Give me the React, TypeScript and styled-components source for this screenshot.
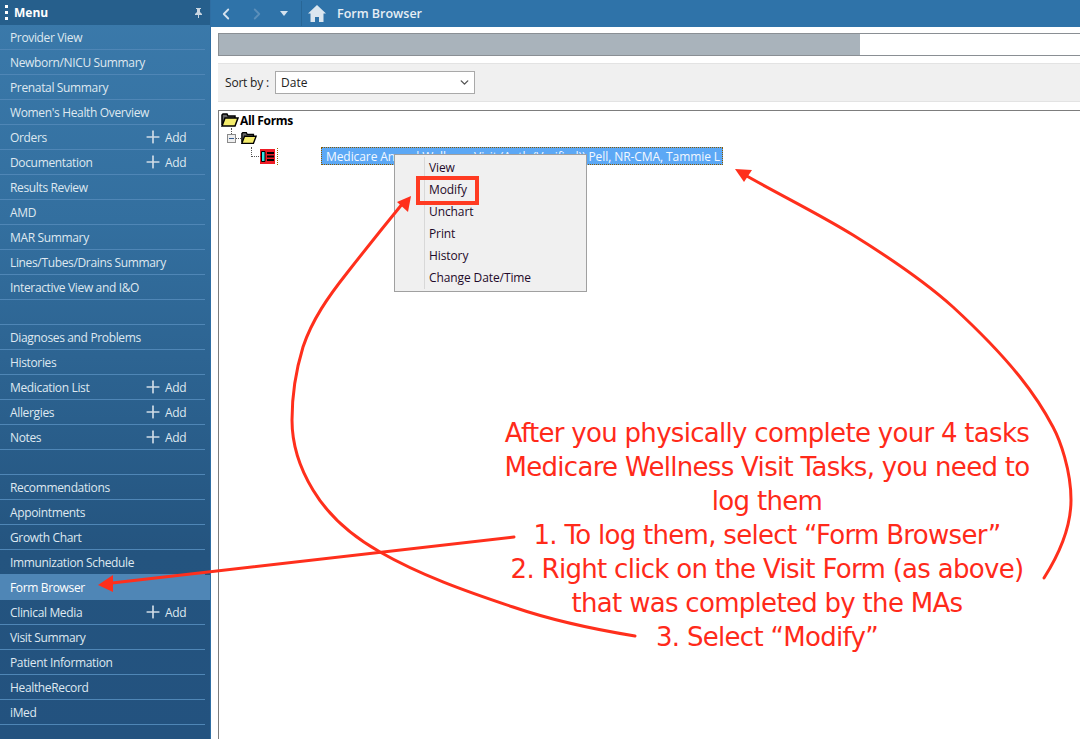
import React from 'react';
import styled, { createGlobalStyle } from 'styled-components';
import { ChevronDown, ChevronLeft, ChevronRight, Plus } from 'lucide-react';

const GlobalStyle = createGlobalStyle`
  html, body {
    margin: 0;
    padding: 0;
    background: #fff;
  }
  body {
    font-family: "Open Sans", "Noto Sans", sans-serif;
  }
`

const Page = styled.div`
  position: relative;
  width: 1080px;
  height: 739px;
  overflow: hidden;
  display: flex;
`

const Sidebar = styled.nav`
  width: 211px;
  box-sizing: border-box;
  flex: none;
  display: flex;
  flex-direction: column;
  background: linear-gradient(180deg, #3b7aab 0%, #336f9f 30%, #24547f 75%, #23527f 100%);
  border-right: 1px solid #2f6ea3;
`

const MenuHead = styled.div`
  height: 25px;
  flex: none;
  display: flex;
  align-items: center;
  background: #265f8c;
  color: #fff;
  font-size: 12px;
  font-weight: 700;
  padding: 0 8px 0 5px;
  gap: 6px;
`

const Dots = styled.span`
  width: 3px;
  height: 15px;
  background: repeating-linear-gradient(180deg, #fff 0 3px, transparent 3px 6px);
`

const HeadLabel = styled.span`
  flex: 1;
`

const SideRow = styled.div<{ $active?: boolean }>`
  height: 25px;
  box-sizing: border-box;
  flex: none;
  display: flex;
  align-items: center;
  padding-left: 10px;
  font-size: 12px;
  letter-spacing: -0.35px;
  color: ${(p) => (p.$active ? '#fff' : '#dfe8f0')};
  background: ${(p) => (p.$active ? '#4f86b6' : 'transparent')};
  margin-right: ${(p) => (p.$active ? '0' : '5px')};
  border-bottom: 1px solid ${(p) => (p.$active ? 'transparent' : '#4f86b6')};
`

const RowLabel = styled.span`
  flex: 1;
`

const AddLink = styled.span`
  width: 44px;
  margin-right: 18px;
  display: flex;
  align-items: center;
  gap: 2px;
  color: #dfe8f0;
`

const Main = styled.main`
  flex: 1;
  display: flex;
  flex-direction: column;
  min-width: 0;
`

const TopBar = styled.header`
  height: 27px;
  flex: none;
  display: flex;
  align-items: center;
  background: #2f73a9;
  color: #dbe6ef;
`

const NavGroup = styled.div`
  width: 91px;
  height: 25px;
  box-sizing: border-box;
  display: flex;
  align-items: center;
  padding-left: 6px;
  gap: 13px;
  border-right: 1px solid #286696;
`

const HomeIcon = styled.svg`
  margin: 0 11px 0 6px;
`

const Title = styled.h1`
  margin: 0;
  font-size: 12.5px;
  font-weight: 600;
  color: #e6eef5;
`

const Body = styled.div`
  flex: 1;
  padding: 6px 0 0 7px;
  display: flex;
  flex-direction: column;
  min-height: 0;
`

const Progress = styled.div`
  height: 23px;
  box-sizing: border-box;
  flex: none;
  border: 1px solid #8a8f94;
  border-right: none;
  background: #fff;
`

const ProgressFill = styled.div`
  width: 641px;
  height: 100%;
  background: #a9b3bb;
`

const SortBar = styled.div`
  height: 39px;
  box-sizing: border-box;
  margin-top: 7px;
  flex: none;
  display: flex;
  align-items: center;
  padding-left: 7px;
  background: #f0f0f0;
  border-top: 1px solid #e3e3e3;
  border-bottom: 1px solid #e3e3e3;
  font-size: 12px;
  color: #222;
`

const SortLabel = styled.span`
  width: 50px;
  letter-spacing: -0.2px;
`

const SortSelect = styled.div`
  width: 200px;
  height: 23px;
  box-sizing: border-box;
  border: 1px solid #a9a9a9;
  background: #fff;
  display: flex;
  align-items: center;
  justify-content: space-between;
  padding: 0 3px 0 5px;
`

const Tree = styled.div`
  flex: 1;
  margin-top: 8px;
  border-top: 1px solid #7d7d7d;
  border-left: 1px solid #7d7d7d;
  font-size: 12px;
  color: #000;
`

const TreeRoot = styled.div`
  height: 18px;
  display: flex;
  align-items: center;
  gap: 1px;
  padding-left: 2px;
  font-weight: 700;
  letter-spacing: -0.35px;
`

const TreeBranch = styled.div`
  height: 18px;
  display: flex;
  align-items: center;
  padding-left: 8px;
  gap: 5px;
`

const Expander = styled.span`
  width: 7px;
  height: 7px;
  border: 1px solid #8a8a8a;
  background: #eee;
  position: relative;
  &::after {
    content: '';
    position: absolute;
    left: 1px;
    right: 1px;
    top: 3px;
    height: 1px;
    background: #3a5f93;
  }
  &::before {
    content: '';
    position: absolute;
    left: 8px;
    top: 3px;
    width: 5px;
    border-top: 1px dotted #555;
  }
`

const Stem = styled.span`
  position: absolute;
  left: 3px;
  top: -7px;
  height: 6px;
  border-left: 1px dotted #555;
`

const TreeLeaf = styled.div`
  height: 18px;
  display: flex;
  align-items: center;
  padding-left: 41px;
  position: relative;
`

const Connector = styled.span`
  width: 9px;
  height: 9px;
  border-left: 1px dotted #555;
  border-bottom: 1px dotted #555;
  position: absolute;
  left: 32px;
  top: 0;
`

const FormIcon = styled.span`
  width: 15px;
  height: 15px;
  background: #ee1c25;
  display: flex;
  align-items: center;
  justify-content: center;
`

const FocusTick = styled.span`
  width: 1px;
  height: 17px;
  margin-left: 2px;
  border-left: 1px dotted #9a6b00;
`

const Selected = styled.span`
  margin-left: 42px;
  width: 402px;
  height: 18px;
  box-sizing: border-box;
  padding-left: 5px;
  background: #5ca8f5;
  color: #f3f8ff;
  outline: 1px dotted #8a5a00;
  outline-offset: -1px;
  display: flex;
  align-items: center;
  white-space: nowrap;
  letter-spacing: -0.08px;
`

const ContextMenu = styled.ul`
  position: absolute;
  left: 394px;
  top: 154px;
  width: 193px;
  height: 138px;
  box-sizing: border-box;
  margin: 0;
  padding: 1px 0 0 0;
  list-style: none;
  background: #f0f0f0;
  border: 1px solid #a0a0a0;
  font-size: 12px;
  color: #1f0a2a;
  &::before {
    content: '';
    position: absolute;
    left: 29px;
    top: 2px;
    bottom: 2px;
    width: 1px;
    background: #d8d8d8;
  }
`

const MenuItem = styled.li`
  height: 22px;
  display: flex;
  align-items: center;
  padding-left: 34px;
  letter-spacing: -0.1px;
`

const Callout = styled.div`
  position: absolute;
  left: 416px;
  top: 176px;
  width: 63px;
  height: 29px;
  box-sizing: border-box;
  border: 4px solid #ff3b22;
`

const Overlay = styled.svg`
  position: absolute;
  left: 0;
  top: 0;
  pointer-events: none;
`

const Note = styled.div`
  position: absolute;
  left: 464px;
  top: 416px;
  width: 606px;
  font-family: "DejaVu Sans", sans-serif;
  font-size: 26px;
  line-height: 34px;
  letter-spacing: -0.7px;
  text-align: center;
  color: #ff2a1a;
`

const sideItems = ['Provider View', 'Newborn/NICU Summary', 'Prenatal Summary', "Women's Health Overview", 'Orders+', 'Documentation+', 'Results Review', 'AMD', 'MAR Summary', 'Lines/Tubes/Drains Summary', 'Interactive View and I&O', '', 'Diagnoses and Problems', 'Histories', 'Medication List+', 'Allergies+', 'Notes+', '', 'Recommendations', 'Appointments', 'Growth Chart', 'Immunization Schedule', 'Form Browser', 'Clinical Media+', 'Visit Summary', 'Patient Information', 'HealtheRecord', 'iMed']

const FolderIcon = ({ width = 18 }: { width?: number }) => (
  <svg width={width} height="14" viewBox="0 0 18 14">
    <path d="M1 12V2l1-1h4l1 2h7v2" fill="#666" stroke="#000" strokeWidth="1.5" />
    <path d="M1 13l3-8h13l-3 8z" fill="#f4ec6c" stroke="#000" strokeWidth="1.5" />
  </svg>
)

const App = () => {
  return (
    <Page>
      <GlobalStyle />
      <Sidebar>
        <MenuHead>
          <Dots />
          <HeadLabel>Menu</HeadLabel>
          <svg width="7" height="10" viewBox="0 0 7 10">
            <path d="M1 0h5v1H5v3l2 2v1H4v3H3V7H0V6l2-2V1H1z" fill="#c9d6e1" />
          </svg>
        </MenuHead>
        {sideItems.map((item, i) => {
          const hasAdd = item.endsWith('+')
          return (
            <SideRow key={i} $active={item === 'Form Browser'}>
              <RowLabel>{hasAdd ? item.slice(0, -1) : item}</RowLabel>
              {hasAdd && (
                <AddLink>
                  <Plus size={20} strokeWidth={2} color="#cfdbe6" />
                  Add
                </AddLink>
              )}
            </SideRow>
          )
        })}
      </Sidebar>
      <Main>
        <TopBar>
          <NavGroup>
            <ChevronLeft size={18} strokeWidth={2.4} color="#d5e2ee" />
            <ChevronRight size={18} strokeWidth={2.4} color="#5b8fba" />
            <svg width="10" height="6" viewBox="0 0 10 6"><path d="M1 0h8L5 5z" fill="#d5e2ee" /></svg>
          </NavGroup>
          <HomeIcon width="18" height="17" viewBox="0 0 18 17">
            <path d="M9 0L0 8.500h2.500V17h4.500v-5h4v5h4.500V8.500H18z" fill="#dbe6ef" />
          </HomeIcon>
          <Title>Form Browser</Title>
        </TopBar>
        <Body>
          <Progress><ProgressFill /></Progress>
          <SortBar>
            <SortLabel>Sort by :</SortLabel>
            <SortSelect>
              Date
              <ChevronDown size={13} strokeWidth={2.6} color="#555" />
            </SortSelect>
          </SortBar>
          <Tree>
            <TreeRoot><FolderIcon />All Forms</TreeRoot>
            <TreeBranch>
              <Expander><Stem /></Expander>
              <FolderIcon width={16} />
            </TreeBranch>
            <TreeLeaf>
              <Connector />
              <FormIcon>
                <svg width="13" height="13" viewBox="0 0 13 13">
                  <path d="M0.500 1.500h3.500v10H0.500z" fill="#2fe6e6" stroke="#000" />
                  <path d="M6 2h7v2H6zM6 5.500h7v2H6zM6 9h7v2H6z" fill="#000" />
                </svg>
              </FormIcon>
              <FocusTick />
              <Selected>Medicare Annual Wellness Visit (Auth (Verified)) Pell, NR-CMA, Tammie L</Selected>
            </TreeLeaf>
          </Tree>
        </Body>
      </Main>
      <ContextMenu>
        <MenuItem>View</MenuItem>
        <MenuItem>Modify</MenuItem>
        <MenuItem>Unchart</MenuItem>
        <MenuItem>Print</MenuItem>
        <MenuItem>History</MenuItem>
        <MenuItem>Change Date/Time</MenuItem>
      </ContextMenu>
      <Callout />
      <Overlay width="1080" height="739" viewBox="0 0 1080 739">
        <g fill="none" stroke="#ff2f1c" strokeWidth="3" strokeLinecap="round">
          <path d="M514 537L112 583" />
          <path d="M1044 578C1065 545 1071 520 1071 500C1071 470 1060 440 1053 427C1043 408 1032 392 1020 377C1000 352 978 330 953 307C923 280 890 258 853 235C819 214 782 196 745 175" />
          <path d="M635 636C592 629 551 620 513 607C465 591 420 575 380 552C350 535 328 515 313 490C299 467 292 444 292 420C292 395 296 370 303 347C312 320 328 297 347 273C365 250 385 225 403 203" />
        </g>
        <g fill="#ff2f1c">
          <polygon points="98,585 113,575 113,592" />
          <polygon points="735,169 752,170 744,182" />
          <polygon points="411,196 397,202 408,212" />
        </g>
      </Overlay>
      <Note>
        After you physically complete your 4 tasks<br />
        Medicare Wellness Visit Tasks, you need to<br />
        log them<br />
        1. To log them, select “Form Browser”<br />
        2. Right click on the Visit Form (as above)<br />
        that was completed by the MAs<br />
        3. Select “Modify”
      </Note>
    </Page>
  );
};

export default App;
